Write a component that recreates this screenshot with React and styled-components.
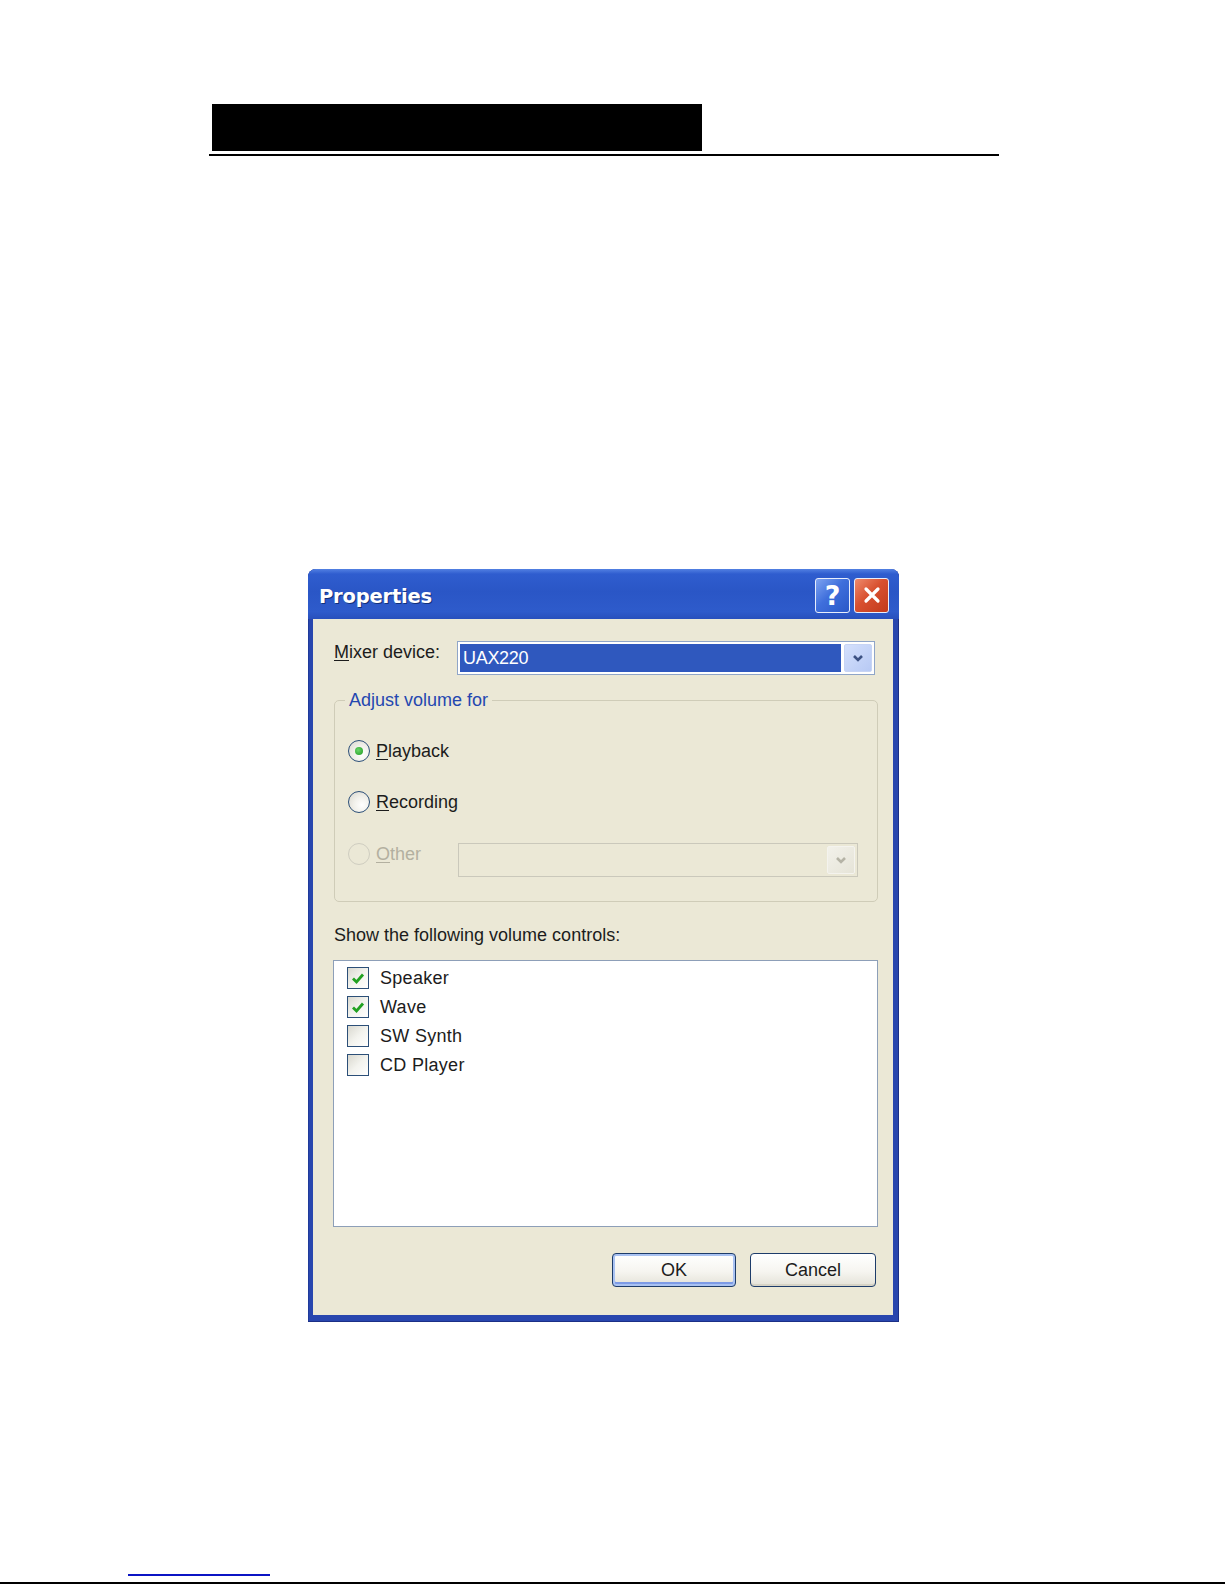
import React from 'react';
import styled, { createGlobalStyle } from 'styled-components';

const GlobalStyle = createGlobalStyle`
  html, body {
    margin: 0;
    padding: 0;
    background: #fff;
  }
  body {
    font-family: "Liberation Sans", Arial, sans-serif;
  }
`;

const Page = styled.div`
  width: 1225px;
  height: 1585px;
  display: flex;
  flex-direction: column;
  overflow: hidden;
`;

const Header = styled.header`
  margin: 104px 0 0 209px;
  width: 790px;
`;

const HeaderBar = styled.div`
  margin-left: 3px;
  width: 490px;
  height: 47px;
  background: #000;
`;

const Rule = styled.div`
  margin-top: 3px;
  height: 2px;
  background: #000;
`;

const Dialog = styled.section`
  margin: 413px 0 0 308px;
  width: 591px;
  height: 753px;
  box-sizing: border-box;
  display: flex;
  flex-direction: column;
  background: #2846ae;
  border-radius: 8px 8px 0 0;
  padding: 0 6px 7px 5px;
  box-shadow: inset -1px -1px 0 #1b2f86, inset 1px 0 0 #1f3a9a;
`;

const TitleBar = styled.div`
  margin: 0 -6px 0 -5px;
  height: 50px;
  flex: none;
  box-sizing: border-box;
  display: flex;
  align-items: center;
  justify-content: space-between;
  padding: 4px 10px 0 11px;
  border-radius: 8px 8px 0 0;
  background: linear-gradient(
    to bottom,
    #5280e2 0%,
    #2f5dcf 10%,
    #2a56c6 45%,
    #2e5bcb 85%,
    #2850bc 100%
  );
`;

const Title = styled.h1`
  margin: 0;
  font-family: "DejaVu Sans", Verdana, sans-serif;
  font-weight: bold;
  font-size: 19.5px;
  color: #fff;
  text-shadow: 1px 1px 0 #12307a;
  letter-spacing: -0.2px;
`;

const TitleButtons = styled.div`
  display: flex;
  gap: 4px;
  margin-top: -2px;
`;

const CaptionButton = styled.button`
  width: 35px;
  height: 35px;
  padding: 0;
  box-sizing: border-box;
  border: 1px solid #e8eefc;
  border-radius: 3px;
  display: flex;
  align-items: center;
  justify-content: center;
  color: #fff;
  font-family: "DejaVu Sans", Verdana, sans-serif;
  font-weight: bold;
  font-size: 27px;
  line-height: 1;
  background: ${p =>
    p.$close
      ? 'linear-gradient(135deg, #ee8a6c 0%, #d8502f 45%, #c23a1c 100%)'
      : 'linear-gradient(135deg, #7ea3f0 0%, #3f6fdc 45%, #2a58c8 100%)'};
`;

const Body = styled.div`
  flex: 1;
  display: flex;
  flex-direction: column;
  background: #ebe8d6;
  padding: 22px 15px 28px 21px;
  font-size: 18px;
  color: #1c1c1c;
`;

const MixerRow = styled.div`
  display: flex;
  align-items: flex-start;
`;

const FieldLabel = styled.span`
  width: 123px;
  flex: none;
  line-height: 22px;
`;

const Key = styled.span`
  text-decoration: underline;
  text-underline-offset: 2px;
`;

const Combo = styled.div`
  height: 34px;
  box-sizing: border-box;
  display: flex;
  padding: 2px;
  border: 1px solid ${p => (p.$disabled ? '#cac8bb' : '#8fa5c8')};
  background: ${p => (p.$disabled ? '#ebe8d6' : '#fff')};
  width: ${p => p.$width}px;
  margin-right: ${p => p.$right || 0}px;
`;

const ComboValue = styled.div`
  flex: 1;
  margin-right: 3px;
  background: ${p => (p.$selected ? '#2f58be' : 'transparent')};
  color: #fff;
  line-height: 28px;
  padding-left: 3px;
  letter-spacing: -0.3px;
`;

const DropButton = styled.div`
  width: 28px;
  height: 28px;
  box-sizing: border-box;
  flex: none;
  display: flex;
  align-items: center;
  justify-content: center;
  border-radius: 2px;
  border: 1px solid ${p => (p.$disabled ? '#f4f3ee' : '#c7d4f4')};
  background: ${p =>
    p.$disabled
      ? 'linear-gradient(135deg, #f2f1ea, #e6e4d8)'
      : 'linear-gradient(135deg, #d4e0fc, #b7c9f4)'};
`;

const Group = styled.fieldset`
  margin: 14px 0 0;
  min-width: 0;
  border: 1px solid #cfccb8;
  border-radius: 5px;
  padding: 29px 19px 24px 13px;
  display: flex;
  flex-direction: column;
  gap: 29px;
`;

const Legend = styled.legend`
  margin-left: -3px;
  padding: 0 4px;
  line-height: 22px;
  color: #2447b0;
`;

const RadioRow = styled.div`
  display: flex;
  align-items: flex-start;
  margin-top: ${p => p.$nudge || 0}px;
`;

const RadioLabel = styled.label`
  display: flex;
  align-items: center;
  gap: 6px;
  height: 22px;
  width: ${p => (p.$width ? `${p.$width}px` : 'auto')};
  flex: none;
  color: ${p => (p.$disabled ? '#b3b0a0' : 'inherit')};
`;

const Radio = styled.span`
  width: 22px;
  height: 22px;
  box-sizing: border-box;
  border-radius: 50%;
  border: 1.5px solid ${p => (p.$disabled ? '#cfcdc0' : '#2c4f78')};
  background: ${p =>
    p.$disabled
      ? '#ebe8d6'
      : 'radial-gradient(circle at 65% 65%, #ffffff 0%, #f1f0ea 45%, #d6d4cb 100%)'};
  display: flex;
  align-items: center;
  justify-content: center;

  &::after {
    content: '';
    width: 8px;
    height: 8px;
    border-radius: 50%;
    background: radial-gradient(circle at 40% 40%, #6ad56a, #1f9a1f);
    display: ${p => (p.$checked ? 'block' : 'none')};
  }
`;

const ShowLabel = styled.div`
  margin-top: 22px;
  line-height: 22px;
`;

const List = styled.div`
  margin: 14px 0 0 -1px;
  height: 267px;
  box-sizing: border-box;
  border: 1px solid #8d9fb8;
  background: #fff;
  padding: 6px 0 0 13px;
  display: flex;
  flex-direction: column;
  gap: 7px;
`;

const CheckRow = styled.label`
  display: flex;
  align-items: center;
  gap: 11px;
  height: 22px;
  letter-spacing: 0.3px;
`;

const CheckBox = styled.span`
  width: 22px;
  height: 22px;
  box-sizing: border-box;
  border: 1.5px solid #2c4f78;
  background: linear-gradient(135deg, #d9d8cf 0%, #f3f3ee 50%, #ffffff 100%);
  display: flex;
  align-items: center;
  justify-content: center;
`;

const ButtonRow = styled.div`
  margin-top: auto;
  margin-right: 2px;
  display: flex;
  justify-content: flex-end;
  gap: 14px;
`;

const PushButton = styled.button`
  width: ${p => p.$width}px;
  height: 34px;
  box-sizing: border-box;
  border: 1px solid #1d3c6a;
  border-radius: 4px;
  font-family: "Liberation Sans", Arial, sans-serif;
  font-size: 18px;
  color: #1c1c1c;
  background: linear-gradient(to bottom, #ffffff 0%, #f6f5f0 55%, #e4e2d8 100%);
  box-shadow: ${p =>
    p.$default
      ? 'inset 0 0 0 2px #a9c2f2, inset 0 -2px 0 2px #7d9be6'
      : 'inset 0 -2px 0 #d6d3c6'};
  padding: 0;
`;

const Footer = styled.footer`
  margin-top: 252px;
  display: flex;
  flex-direction: column;
`;

const LinkLine = styled.div`
  margin-left: 128px;
  width: 142px;
  height: 2px;
  background: #0b14c4;
`;

const BottomRule = styled.div`
  margin-top: 6px;
  height: 2px;
  background: #000;
`;

const Chevron = ({ color }) => (
  <svg width="12" height="9" viewBox="0 0 12 9">
    <polyline points="2,2 6,6 10,2" fill="none" stroke={color} strokeWidth="2.6" />
  </svg>
);

const Check = () => (
  <svg width="14" height="13" viewBox="0 0 14 13">
    <polyline points="2,6.5 5.5,10 12,2.5" fill="none" stroke="#21a121" strokeWidth="2.8" />
  </svg>
);

const CloseGlyph = () => (
  <svg width="18" height="18" viewBox="0 0 18 18">
    <path d="M3 3 L15 15 M15 3 L3 15" stroke="#fff" strokeWidth="3.2" strokeLinecap="round" />
  </svg>
);

const controls = [
  { name: 'Speaker', on: true },
  { name: 'Wave', on: true },
  { name: 'SW Synth', on: false },
  { name: 'CD Player', on: false },
];

export default function App() {
  return (
    <Page>
      <GlobalStyle />
      <Header>
        <HeaderBar />
        <Rule />
      </Header>

      <Dialog>
        <TitleBar>
          <Title>Properties</Title>
          <TitleButtons>
            <CaptionButton>?</CaptionButton>
            <CaptionButton $close>
              <CloseGlyph />
            </CaptionButton>
          </TitleButtons>
        </TitleBar>

        <Body>
          <MixerRow>
            <FieldLabel>
              <Key>M</Key>ixer device:
            </FieldLabel>
            <Combo $width={418} $right={3}>
              <ComboValue $selected>UAX220</ComboValue>
              <DropButton>
                <Chevron color="#3d5283" />
              </DropButton>
            </Combo>
          </MixerRow>

          <Group>
            <Legend>Adjust volume for</Legend>
            <RadioRow>
              <RadioLabel>
                <Radio $checked />
                <span>
                  <Key>P</Key>layback
                </span>
              </RadioLabel>
            </RadioRow>
            <RadioRow>
              <RadioLabel>
                <Radio />
                <span>
                  <Key>R</Key>ecording
                </span>
              </RadioLabel>
            </RadioRow>
            <RadioRow $nudge={1}>
              <RadioLabel $disabled $width={110}>
                <Radio $disabled />
                <span>
                  <Key>O</Key>ther
                </span>
              </RadioLabel>
              <Combo $disabled $width={400}>
                <ComboValue />
                <DropButton $disabled>
                  <Chevron color="#b5b3a6" />
                </DropButton>
              </Combo>
            </RadioRow>
          </Group>

          <ShowLabel>Show the following volume controls:</ShowLabel>
          <List>
            {controls.map(c => (
              <CheckRow key={c.name}>
                <CheckBox>{c.on && <Check />}</CheckBox>
                {c.name}
              </CheckRow>
            ))}
          </List>

          <ButtonRow>
            <PushButton $width={124} $default>OK</PushButton>
            <PushButton $width={126}>Cancel</PushButton>
          </ButtonRow>
        </Body>
      </Dialog>

      <Footer>
        <LinkLine />
        <BottomRule />
      </Footer>
    </Page>
  );
}
